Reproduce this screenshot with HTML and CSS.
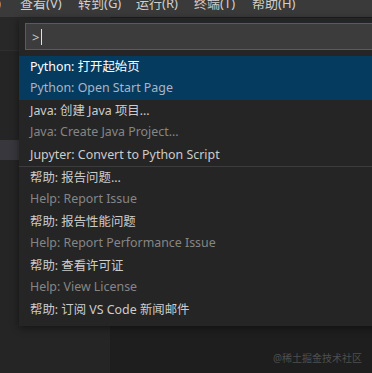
FILE: index.html
```html
<!DOCTYPE html>
<html>
<head>
    <title>Command Palette</title>
    <link rel="stylesheet" href="styles.css">
</head>
<body>
    <div class="menubar">
        <span class="menu-item cut">)</span>
        <span class="menu-item">查看(V)</span>
        <span class="menu-item">转到(G)</span>
        <span class="menu-item">运行(R)</span>
        <span class="menu-item">终端(T)</span>
        <span class="menu-item">帮助(H)</span>
    </div>

    <div class="workbench">
        <div class="sidebar">
            <div class="sidebar-head"></div>
            <div class="sidebar-row"></div>
        </div>
        <div class="editor"></div>
    </div>

    <div class="quick-input">
        <div class="input-box">
            <span class="prompt">&gt;</span><span class="caret"></span>
        </div>
        <div class="list">
            <div class="item two-line selected">
                <div class="label">Python: 打开起始页</div>
                <div class="detail">Python: Open Start Page</div>
            </div>
            <div class="item two-line">
                <div class="label">Java: 创建 Java 项目...</div>
                <div class="detail">Java: Create Java Project...</div>
            </div>
            <div class="item">
                <div class="label">Jupyter: Convert to Python Script</div>
            </div>
            <div class="item two-line separated">
                <div class="label">帮助: 报告问题...</div>
                <div class="detail">Help: Report Issue</div>
            </div>
            <div class="item two-line">
                <div class="label">帮助: 报告性能问题</div>
                <div class="detail">Help: Report Performance Issue</div>
            </div>
            <div class="item two-line">
                <div class="label">帮助: 查看许可证</div>
                <div class="detail">Help: View License</div>
            </div>
            <div class="item">
                <div class="label">帮助: 订阅 VS Code 新闻邮件</div>
            </div>
        </div>
    </div>

    <div class="watermark">@稀土掘金技术社区</div>
</body>
</html>
```

FILE: styles.css
```css
html, body { margin: 0; padding: 0; height: 100%; overflow: hidden; }
body { background: #1e1e1e; font-family: "Noto Sans", "Noto Sans CJK SC", sans-serif; font-size: 12.4px; color: #cccccc; position: relative; }

.menubar { height: 17px; background: #3a3a3a; display: flex; overflow: hidden; }
.menu-item { width: 58px; font-size: 13px; line-height: 13px; margin-top: -3px; color: #cfcfcf; white-space: nowrap; }
.menu-item.cut { width: 20px; text-indent: -3px; }

.workbench { display: flex; height: calc(100% - 17px); }
.sidebar { width: 110px; background: #252526; }
.sidebar-head { height: 33px; background: #282828; border-bottom: 1px solid #2e2e2e; }
.sidebar-row { height: 20px; margin-top: 89px; background: #37373d; }
.editor { flex: 1; background: #1e1e1e; }

.quick-input { position: absolute; left: 19px; top: 18px; right: -20px; height: 308px; background: #252526; box-shadow: 0 2px 8px rgba(0, 0, 0, 0.45); }
.input-box { margin: 5px 6px 0; height: 25px; border: 1px solid #0e70b8; background: #3c3c3c; display: flex; align-items: center; padding-left: 6px; }
.prompt { color: #cccccc; font-size: 13px; }
.caret { width: 1px; height: 16px; background: #e0e0e0; margin-left: 2px; }

.list { margin-top: 6px; }
.item { padding-left: 11px; }
.item.two-line { padding-bottom: 2px; }
.item.selected { background: #063b60; }
.item.selected .label { color: #ffffff; }
.item.selected .detail { color: #a6b6c6; }
.item.separated { border-top: 1px solid #3c3c3c; }
.label { line-height: 22px; color: #cccccc; white-space: nowrap; }
.detail { line-height: 20px; color: #858585; white-space: nowrap; }

.watermark { position: absolute; right: 10px; bottom: 8px; font-size: 10px; color: #4e4e4e; }
```
